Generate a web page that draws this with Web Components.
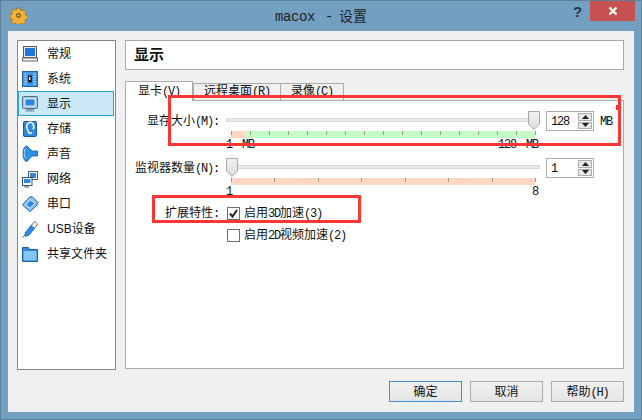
<!DOCTYPE html>
<html>
<head>
<meta charset="utf-8">
<style>
html, body { margin: 0; padding: 0; }
body { width: 642px; height: 420px; overflow: hidden; font: 12px/16px "Liberation Sans", "Noto Sans CJK SC", sans-serif; color: #111; }
</style>
</head>
<body>
<vb-dialog>
  <vb-side slot="side"></vb-side>
  <vb-page slot="main"></vb-page>
</vb-dialog>
<script>
"use strict"
{
    // the latin part of the labels is half-width in the reference: 6px a character
    function t(text) {
        return text.replace(/[\x21-\x7e]+( [\x21-\x7e]+)*/g, m => `<span style="font-family:'Liberation Mono',monospace;letter-spacing:-1.2px;line-height:0">${m}</span>`);
    }

    class Dialog extends HTMLElement {
        constructor() {
            super();
            this.attachShadow({ mode: 'open' }).innerHTML = `
<style>
:host { display: flex; flex-direction: column; width: 642px; height: 420px; box-sizing: border-box; background: #739fc1; border: 1px solid #5e8198; position: relative; }
.title { height: 30px; position: relative; flex: none; }
.gear { position: absolute; left: 9px; top: 6px; }
.name { position: absolute; left: 0; right: 0; top: 5px; text-align: center; font-size: 14px; line-height: 20px; color: #222; word-spacing: 2px; }
.name span { letter-spacing: -.4px !important; }
.help { position: absolute; left: 572px; top: 2px; font: bold 15px "Liberation Sans", sans-serif; color: #2a3844; }
.close { position: absolute; left: 589px; top: 0; width: 45px; height: 20px; background: #c75050; display: flex; align-items: center; justify-content: center; }
.client { flex: 1; margin: 0 7px 7px 7px; background: #f0f0f0; padding: 9px 10px 10px 9px; display: flex; flex-direction: column; min-height: 0; }
.top { display: flex; gap: 9px; flex: 1; min-height: 0; }
.foot { display: flex; justify-content: flex-end; gap: 8px; margin-top: 11px; flex: none; }
</style>
<div class="title">
  <svg class="gear" width="17" height="17" viewBox="0 0 17 17"><path d="M7 1h3l.5 2 1.600.7L14 2.700l2 2.100-1 1.800.6 1.500 2 .5v3l-2 .5-.7 1.500 1 1.800-2.100 2-1.800-1-1.500.6-.5 1.500H7l-.5-1.700-1.500-.6-1.800 1-2-2 1-1.800-.7-1.500-1.500-.5V8l1.800-.6.6-1.500-1-1.700 2-2.100 1.800 1L6.500 3z" fill="#f0b23a" stroke="#8a5a12" stroke-width=".6"/><circle cx="8.500" cy="8.500" r="2.400" fill="#7a4e14"/><circle cx="8.500" cy="8.500" r="1.100" fill="#f6d67a"/></svg>
  <div class="name">${t('macox - ')} 设置</div>
  <div class="help">?</div>
  <div class="close"><svg width="10" height="10" viewBox="0 0 10 10"><path d="M1.500 1.500l7 7M8.500 1.500l-7 7" stroke="#fff" stroke-width="2.200"/></svg></div>
</div>
<div class="client">
  <div class="top"><slot name="side"></slot><slot name="main"></slot></div>
  <div class="foot">
    <vb-button focus>确定</vb-button>
    <vb-button>取消</vb-button>
    <vb-button>${t('帮助(H)')}</vb-button>
  </div>
</div>`;
        }
    }

    class Button extends HTMLElement {
        constructor() {
            super();
            this.attachShadow({ mode: 'open' }).innerHTML = `
<style>
:host { display: flex; align-items: center; justify-content: center; width: 73px; height: 21px; box-sizing: border-box; border: 1px solid #acacac; background: linear-gradient(#f0f0f0, #e5e5e5); color: #111; }
:host([focus]) { border-color: #3c90d8; }
</style><div><slot></slot></div>`;
        }
    }

    const ICONS = {
        general: '<rect x="2.500" y="1.500" width="13" height="11" fill="#e6ebf0" stroke="#5a5a5a"/><rect x="4" y="3" width="10" height="8" fill="#1f78e0"/><rect x="1.500" y="13" width="15" height="3" fill="#f2f2f2" stroke="#6a6a6a"/>',
        system: '<rect x="1.500" y="1.500" width="15" height="15" fill="#3f96e6" stroke="#1f66b4"/><path d="M3.500 4h2M3.500 6.500h2M3.500 9h2M3.500 11.500h2M3.500 14h2M12.500 4h2M12.500 6.500h2M12.500 9h2M12.500 11.500h2M12.500 14h2" stroke="#e4f2ff"/><rect x="7" y="5.500" width="4" height="7" fill="#222"/><rect x="8" y="7" width="1.500" height="3" fill="#e8e8e8"/>',
        display: '<rect x="1.500" y="1.500" width="15" height="12" rx="1" fill="#a9c6e2" stroke="#4a6c90"/><rect x="4" y="4" width="10" height="7" fill="#2a84e2" stroke="#fff" stroke-width=".8"/><path d="M6 14h6l2 2.500H4z" fill="#7f9ab8"/>',
        storage: '<rect x="2.500" y="1.500" width="13" height="15" rx="1" fill="#2d88e2" stroke="#155aa8"/><path d="M12 9.500a3.500 4.500 0 1 0-6-1c1.500 1 .5 4 2.500 5 1 .3 2-.5 2-1.500" fill="none" stroke="#fff" stroke-width="1.500"/>',
        audio: '<path d="M2 8.500C2 4 3.500 1 6 1l5 5h5.500v5H11l-5 5.500C3.500 16.500 2 13 2 8.500z" fill="#2f8ee6" stroke="#155aa8" stroke-width=".8"/><path d="M4.500 3.500C3.500 5 3.300 7 3.300 8.500s.2 3.500 1.200 5" fill="none" stroke="#a8d8fa"/>',
        network: '<rect x="7.500" y="1.500" width="9" height="8" fill="#fff" stroke="#4a5a6c"/><rect x="9" y="3" width="6" height="5" fill="#2f86dc"/><rect x="1.500" y="7.500" width="9.500" height="8" fill="#fff" stroke="#38506c"/><rect x="3" y="9" width="6.500" height="4" fill="#2f86dc"/><path d="M4 15.500v1.500h4" stroke="#38506c" fill="none"/>',
        serial: '<path d="M1.500 10L8 2.500l3-1 6 6-1 2.500-7 6.500z" fill="#8cc4f2" stroke="#1d5ea8"/><path d="M5 9.500l4.500-4.500 4 3.500-4.500 4.500z" fill="#2f86dc" stroke="#e6f4ff" stroke-width=".7"/>',
        usb: '<path d="M10 6l3.500-4.500 3 2.500-3 4.500z" fill="#fff" stroke="#5a6a7a"/><path d="M10 5.500l3.500 3L8 15l-3.500 1.500L4 13z" fill="#2f8ee6" stroke="#155aa8" stroke-width=".8"/><path d="M1.500 17.500l3-3" stroke="#155aa8"/>',
        folder: '<path d="M1.500 5V2.500h6l1 2h8v12h-15z" fill="#2f86dc" stroke="#1a5fa6"/><rect x="2.500" y="6" width="13" height="9.500" fill="#84c6f6"/>'
    };

    class SideItem extends HTMLElement {
        constructor() {
            super();
            const icon = ICONS[this.getAttribute('icon')];
            this.attachShadow({ mode: 'open' }).innerHTML = `
<style>
:host { display: flex; align-items: center; height: 25px; box-sizing: border-box; padding-left: 3px; color: #111; }
:host([active]) { background: #cbe8f6; border: 1px solid #26a0da; margin-right: 1px; padding-left: 2px; }
svg { flex: none; margin-right: 8px; }
</style>
<svg width="18" height="18" viewBox="0 0 18 18">${icon}</svg><div><slot></slot></div>`;
        }
    }

    class Side extends HTMLElement {
        constructor() {
            super();
            this.attachShadow({ mode: 'open' }).innerHTML = `
<style>
:host { display: block; width: 99px; box-sizing: border-box; border: 1px solid #82878c; background: #fff; flex: none; }
</style>
<vb-side-item icon="general">常规</vb-side-item>
<vb-side-item icon="system">系统</vb-side-item>
<vb-side-item icon="display" active>显示</vb-side-item>
<vb-side-item icon="storage">存储</vb-side-item>
<vb-side-item icon="audio">声音</vb-side-item>
<vb-side-item icon="network">网络</vb-side-item>
<vb-side-item icon="serial">串口</vb-side-item>
<vb-side-item icon="usb">USB设备</vb-side-item>
<vb-side-item icon="folder">共享文件夹</vb-side-item>`;
        }
    }

    // slider groove, thumb, coloured scale and the two end labels
    class Slider extends HTMLElement {
        constructor() {
            super();
            const red = +this.getAttribute('red') || 100;
            const ticks = +this.getAttribute('ticks') || 0;
            const thumb = this.getAttribute('thumb') || 'left';
            let marks = '';
            for (let i = 0; i <= ticks; i++) marks += `<i style="left:${(i * 100 / ticks).toFixed(2)}%"></i>`;
            this.attachShadow({ mode: 'open' }).innerHTML = `
<style>
:host { display: block; width: 314px; }
.track { height: 20px; position: relative; }
.groove { position: absolute; left: 0; right: 0; top: 7px; height: 4px; box-sizing: border-box; background: #e9ebe9; border: 1px solid #d6d9d6; }
.thumb { position: absolute; top: 0; ${thumb === 'right' ? 'right: 0' : 'left: 0'}; }
.scale { height: 7px; margin: 0 5px; position: relative; background: #c6fdc6; }
.scale b { position: absolute; left: 0; top: 0; bottom: 0; width: ${red}%; background: #fed7c3; }
.scale i { position: absolute; top: 0; height: 4px; width: 1px; background: #9c9c94; }
.nums { display: flex; justify-content: space-between; height: 12px; line-height: 12px; padding: 0 2px 0 0; word-spacing: 4px; }
</style>
<div class="track"><div class="groove"></div>
<svg class="thumb" width="12" height="19" viewBox="0 0 12 19"><defs><linearGradient id="g" x1="0" y1="0" x2="0" y2="1"><stop offset="0" stop-color="#f2f2f2"/><stop offset="1" stop-color="#dcdcdc"/></linearGradient></defs><path d="M.5.500h11v12.500l-5.500 5.500-5.500-5.500z" fill="url(#g)" stroke="#a6a6a6"/></svg></div>
<div class="scale"><b></b>${marks}</div>
<div class="nums"><span>${t(this.getAttribute('low'))}</span><span>${t(this.getAttribute('high'))}</span></div>`;
        }
    }

    class Spin extends HTMLElement {
        constructor() {
            super();
            this.attachShadow({ mode: 'open' }).innerHTML = `
<style>
:host { display: flex; width: 48px; height: 20px; box-sizing: border-box; border: 1px solid #ababab; background: #fff; padding: 1px; align-items: center; }
span { flex: 1; padding-left: 3px; }
.btns { width: 14px; align-self: stretch; display: grid; grid-template-rows: 1fr 1fr; gap: 1px; }
.btns div { background: #e8e8e8; border: 1px solid #acacac; display: flex; align-items: center; justify-content: center; }
</style>
<span><slot></slot></span>
<div class="btns">
  <div><svg width="7" height="4"><path d="M3.500 0L7 4H0z" fill="#222"/></svg></div>
  <div><svg width="7" height="4"><path d="M0 0h7L3.500 4z" fill="#222"/></svg></div>
</div>`;
        }
    }

    class Check extends HTMLElement {
        constructor() {
            super();
            const tick = this.hasAttribute('checked') ? '<path d="M3 6.500l2.500 3L10 3" fill="none" stroke="#222" stroke-width="2"/>' : '';
            this.attachShadow({ mode: 'open' }).innerHTML = `
<style>
:host { display: flex; align-items: center; gap: 4px; height: 22px; padding-left: 1px; }
</style>
<svg width="13" height="13" viewBox="0 0 13 13"><rect x=".5" y=".5" width="12" height="12" fill="#fff" stroke="#707070"/>${tick}</svg><div><slot></slot></div>`;
        }
    }

    class Page extends HTMLElement {
        constructor() {
            super();
            this.attachShadow({ mode: 'open' }).innerHTML = `
<style>
:host { display: flex; flex-direction: column; flex: 1; min-width: 0; position: relative; padding-bottom: 1px; }
.head { height: 30px; box-sizing: border-box; border: 1px solid #a9a9a9; background: #fff; padding-left: 8px; display: flex; align-items: center; font-size: 15px; font-weight: 700; flex: none; }
.tabs { display: flex; margin-top: 11px; height: 19px; flex: none; position: relative; z-index: 1; }
.tab { box-sizing: border-box; height: 18px; margin-top: 2px; border: 1px solid #acacac; background: #f0f0f0; text-align: center; line-height: 15px; }
.tab.on { background: #fff; border-bottom: 0; height: 20px; margin-top: 0; line-height: 18px; }
.pane { flex: 1; border: 1px solid #acacac; background: #fff; padding-top: 10px; }
.row { display: grid; grid-template-columns: 100px 314px 54px auto; }
.row + .row { margin-top: 8px; }
.lab { text-align: right; padding-right: 7px; }
.row .lab { line-height: 16px; padding-top: 2px; }
vb-spin { margin-left: 6px; width: 48px; }
.unit { padding-left: 6px; line-height: 20px; }
.feat { display: grid; grid-template-columns: 100px auto; margin-top: 5px; line-height: 22px; }
.mark { position: absolute; border: 3px solid #fd3535; box-sizing: border-box; z-index: 2; }
.nub { position: absolute; left: 491px; top: 65px; width: 2px; height: 5px; background: #fd3535; z-index: 2; }
</style>
<div class="head">显示</div>
<div class="tabs">
  <div class="tab on" style="width:68px">${t('显卡(V)')}</div>
  <div class="tab" style="width:88px">${t('远程桌面(R)')}</div>
  <div class="tab" style="width:64px;margin-left:-1px">${t('录像(C)')}</div>
</div>
<div class="pane">
  <div class="row"><div class="lab">${t('显存大小(M):')}</div><vb-slider red="4.600" ticks="16" thumb="right" low="1 MB" high="128 MB"></vb-slider><vb-spin>${t('128')}</vb-spin><div class="unit">${t('MB')}</div></div>
  <div class="row"><div class="lab">${t('监视器数量(N):')}</div><vb-slider ticks="7" low="1" high="8"></vb-slider><vb-spin>${t('1')}</vb-spin></div>
  <div class="feat">
    <div class="lab">${t('扩展特性:')}</div><vb-check checked>${t('启用3D加速(3)')}</vb-check>
    <div></div><vb-check>${t('启用2D视频加速(2)')}</vb-check>
  </div>
</div>
<div class="mark" style="left:43px;top:55px;width:453px;height:51px"></div>
<div class="nub"></div>
<div class="mark" style="left:27px;top:155px;width:209px;height:28px"></div>`;
        }
    }

    customElements.define('vb-button', Button);
    customElements.define('vb-side-item', SideItem);
    customElements.define('vb-side', Side);
    customElements.define('vb-slider', Slider);
    customElements.define('vb-spin', Spin);
    customElements.define('vb-check', Check);
    customElements.define('vb-page', Page);
    customElements.define('vb-dialog', Dialog);
}
</script>
</body>
</html>
